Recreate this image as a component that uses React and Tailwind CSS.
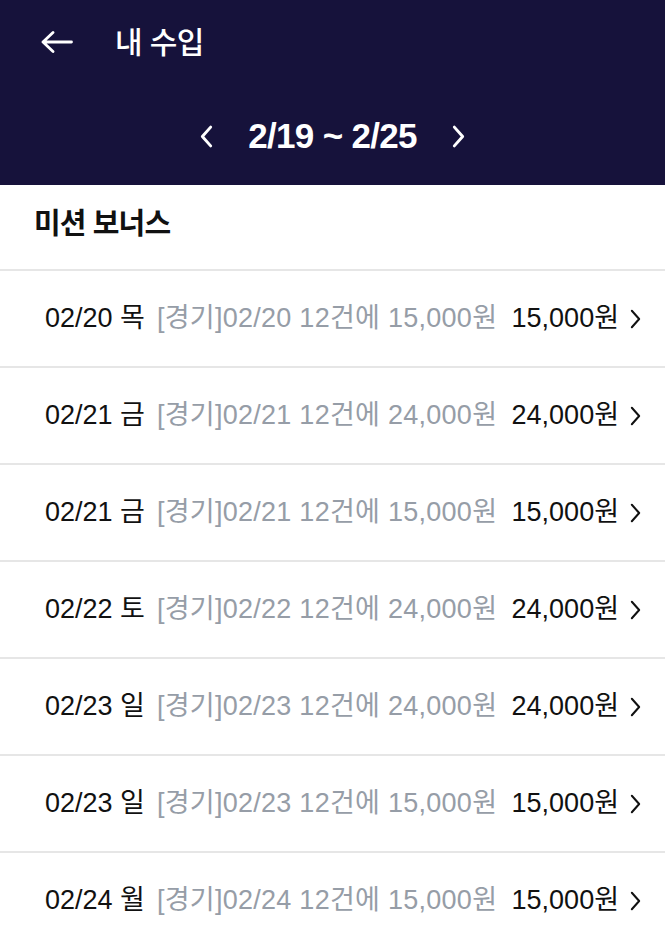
import React from "react";

const rows = [
  { date: "02/20 목", desc: "[경기]02/20 12건에 15,000원", amount: "15,000원" },
  { date: "02/21 금", desc: "[경기]02/21 12건에 24,000원", amount: "24,000원" },
  { date: "02/21 금", desc: "[경기]02/21 12건에 15,000원", amount: "15,000원" },
  { date: "02/22 토", desc: "[경기]02/22 12건에 24,000원", amount: "24,000원" },
  { date: "02/23 일", desc: "[경기]02/23 12건에 24,000원", amount: "24,000원" },
  { date: "02/23 일", desc: "[경기]02/23 12건에 15,000원", amount: "15,000원" },
  { date: "02/24 월", desc: "[경기]02/24 12건에 15,000원", amount: "15,000원" },
];

function Chevron({ dir = "right", className, width = 2.2 }) {
  const d = dir === "right" ? "M4 3 L12 12 L4 21" : "M12 3 L4 12 L12 21";
  return (
    <svg viewBox="0 0 16 24" className={className} fill="none">
      <path d={d} stroke="currentColor" strokeWidth={width} strokeLinecap="round" strokeLinejoin="round" />
    </svg>
  );
}

function App() {
  return (
    <div
      className="min-h-screen bg-white"
      style={{ fontFamily: '"Liberation Sans", "Noto Sans CJK KR", sans-serif' }}
    >
      {/* header */}
      <div className="bg-[#16123b] text-white h-[185px] flex flex-col">
        <div className="flex items-center h-[84px] pl-[41px]">
          <svg viewBox="0 0 32 22" className="w-[32px] h-[22px]" fill="none">
            <path d="M30.5 11 H2 M12 1.5 L2 11 L12 20.5" stroke="white" strokeWidth="2.8" strokeLinecap="round" strokeLinejoin="round" />
          </svg>
          <span className="ml-[42px] text-[30px] font-medium tracking-[-0.02em]">내 수입</span>
        </div>
        <div className="flex items-center justify-center h-[101px] pt-[4px]">
          <Chevron dir="left" width={2.8} className="w-[17px] h-[25px] text-white" />
          <span className="mx-[33px] text-[35px] font-bold tracking-[-0.02em]">2/19 ~ 2/25</span>
          <Chevron dir="right" width={2.8} className="w-[17px] h-[25px] text-white" />
        </div>
      </div>

      {/* section title */}
      <div className="h-[86px] flex items-center pl-[34px] pb-[4px] border-b-2 border-[#e6e6e6]">
        <span className="text-[29px] font-bold text-[#111] tracking-[-0.03em]">미션 보너스</span>
      </div>

      {/* list */}
      <div>
        {rows.map((r, i) => (
          <div
            key={i}
            className="h-[97px] flex items-center pl-[45px] pr-[22px] border-b-2 border-[#e6e6e6] text-[27px]"
          >
            <div className="flex-1 min-w-0 whitespace-nowrap overflow-hidden">
              <span className="text-[#111]">{r.date}</span>
              <span className="ml-[12px] text-[#969da7] tracking-[0.01em]">{r.desc}</span>
            </div>
            <span className="text-[#111] whitespace-nowrap">{r.amount}</span>
            <Chevron dir="right" className="ml-[9px] w-[15px] h-[22px] text-[#111]" />
          </div>
        ))}
      </div>
    </div>
  );
}

export default App;
